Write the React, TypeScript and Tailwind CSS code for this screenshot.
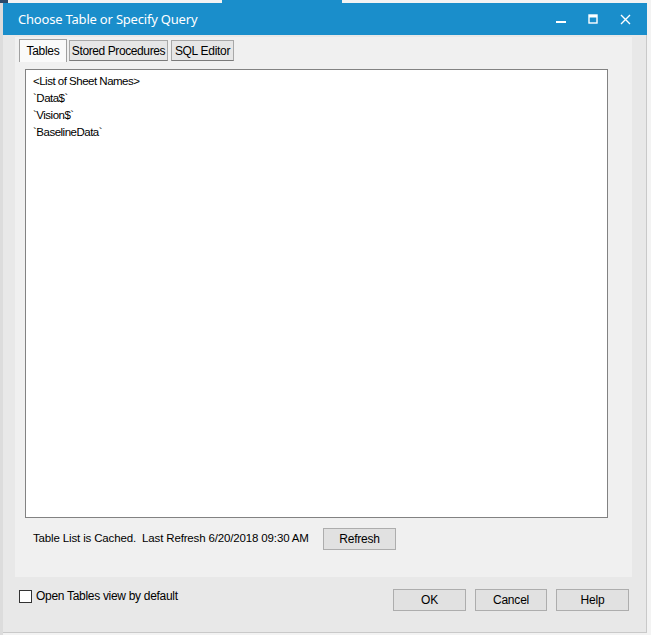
import React from "react";

const ui = { fontFamily: '"Liberation Sans", Arial, sans-serif' };

function Btn({ label, w }: { label: string; w: string }) {
  return (
    <div
      className={`${w} h-[22px] flex items-center justify-center bg-[#e1e1e1] border border-[#adadad] text-[12px] text-black tracking-[-0.2px]`}
    >
      {label}
    </div>
  );
}

export default function App() {
  return (
    <div className="w-[651px] h-[635px] bg-[#f3f3f3] relative overflow-hidden" style={ui}>
      {/* desktop fragments behind */}
      <div className="absolute left-0 top-0 w-[8px] h-[3px] bg-[#2b4a6b]" />
      <div className="absolute left-[222px] top-0 w-[120px] h-[3px] bg-[#1a8ecb]" />
      <div className="absolute left-0 top-[3px] w-[3px] h-[632px] bg-[#dcdcdc]" />

      <div className="ml-[3px] pt-[3px] w-[644px] h-[633px] flex flex-col">
        {/* title bar */}
        <div className="h-[32px] shrink-0 bg-[#1a8ecb] flex items-center pl-[15px] pr-[16px] text-white">
          <span
            className="text-[13px] tracking-[-0.2px] mt-[1px]"
            style={{ fontFamily: '"Noto Sans", "Open Sans", sans-serif' }}
          >
            Choose Table or Specify Query
          </span>
          <div className="ml-auto flex items-center gap-[22px]">
            <svg width="10" height="10" viewBox="0 0 10 10">
              <rect x="0" y="7" width="10" height="2" fill="white" />
            </svg>
            <svg width="10" height="10" viewBox="0 0 10 10">
              <rect x="1" y="1" width="8" height="8" fill="none" stroke="white" strokeWidth="1.4" />
              <rect x="1" y="1" width="8" height="2.5" fill="white" />
            </svg>
            <svg width="11" height="11" viewBox="0 0 11 11">
              <path d="M1 1 L10 10 M10 1 L1 10" stroke="white" strokeWidth="1.4" />
            </svg>
          </div>
        </div>

        {/* body */}
        <div className="flex-1 bg-[#e8e8e8] border-r border-b border-[#c9c9c9] flex flex-col px-[12px] pt-[2px]">
          {/* tab panel */}
          <div className="w-[617px] h-[540px] bg-[#f0f0f0] flex flex-col">
            <div className="flex items-end pl-[4px] pt-[2px] h-[25px] gap-[2px]">
              <div className="h-[23px] w-[48px] bg-[#fafafa] border border-b-0 border-[#a0a0a0] flex items-center justify-center text-[12px] tracking-[-0.3px] text-black">
                Tables
              </div>
              <div className="h-[21px] w-[99px] bg-[#e6e6e6] border border-[#a8a8a8] border-b-[#7a7a7a] flex items-center justify-center text-[12px] tracking-[-0.4px] text-black mb-[1px]">
                Stored Procedures
              </div>
              <div className="h-[21px] w-[63px] ml-[1px] bg-[#e6e6e6] border border-[#a8a8a8] border-b-[#7a7a7a] flex items-center justify-center text-[12px] tracking-[-0.3px] text-black mb-[1px]">
                SQL Editor
              </div>
            </div>

            <div className="ml-[10px] mt-[7px] w-[583px] h-[449px] bg-white border border-[#828282] pl-[7px] pt-[3px] flex flex-col text-[11.5px] leading-[17px] tracking-[-0.5px] text-black">
              <div>&lt;List of Sheet Names&gt;</div>
              <div>`Data$`</div>
              <div>`Vision$`</div>
              <div>`BaselineData`</div>
            </div>

            <div className="flex items-center ml-[18px] mt-[10px]">
              <span className="text-[11.5px] tracking-[-0.15px] text-black whitespace-pre">
                Table List is Cached.  Last Refresh 6/20/2018 09:30 AM
              </span>
              <div className="ml-auto mr-[236px]">
                <Btn label="Refresh" w="w-[73px]" />
              </div>
            </div>
          </div>

          {/* bottom row */}
          <div className="flex items-start mt-[12px]">
            <div className="flex items-center -mt-[1px] ml-[4px]">
              <div className="w-[13px] h-[13px] bg-white border border-[#333333]" />
              <span className="ml-[4px] text-[12px] tracking-[-0.3px] text-black -mt-[1px]">
                Open Tables view by default
              </span>
            </div>
            <div className="ml-auto mr-[5px] flex gap-[9px]">
              <Btn label="OK" w="w-[73px]" />
              <Btn label="Cancel" w="w-[72px]" />
              <Btn label="Help" w="w-[73px]" />
            </div>
          </div>
        </div>
      </div>
    </div>
  );
}
